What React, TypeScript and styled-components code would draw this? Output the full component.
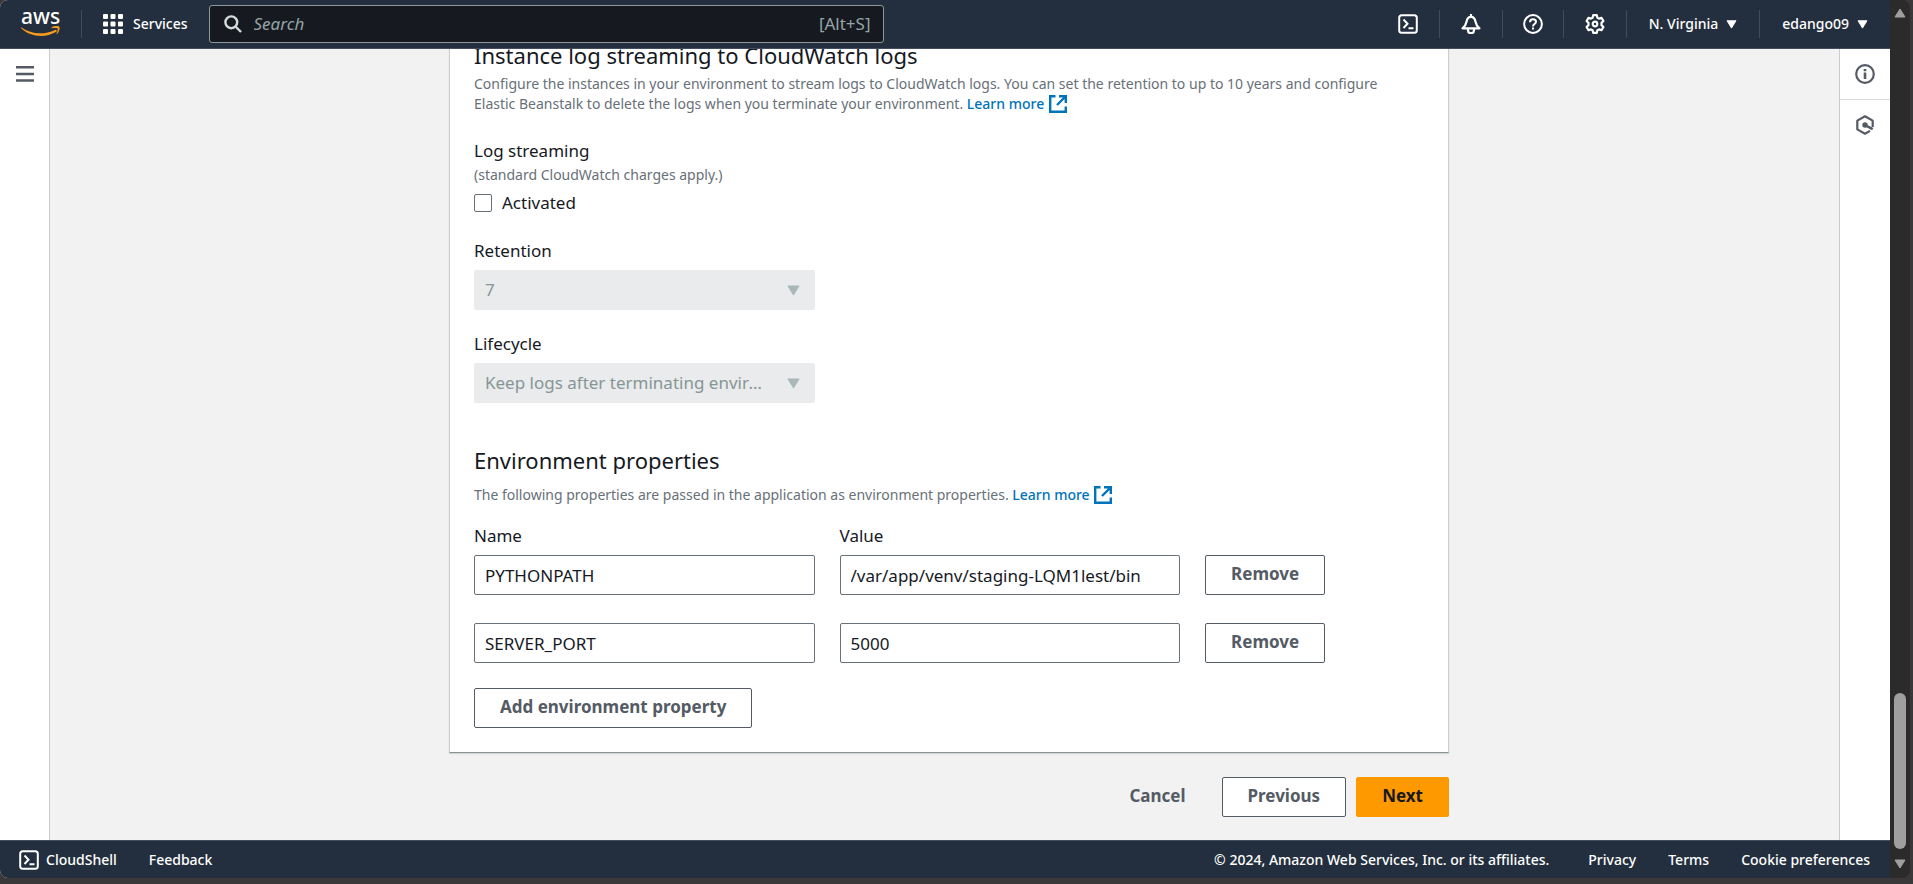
import React from "react";
import styled, { createGlobalStyle } from "styled-components";

const GlobalStyle = createGlobalStyle`
  *, *::before, *::after { box-sizing: border-box; }
  body {
    margin: 0;
    background: #3a3838;
    color: #16191f;
    font: 400 17px/24px "Noto Sans", "Open Sans", sans-serif;
  }
  button, input, select { font: inherit; color: inherit; }
  a { text-decoration: none; }
`;

/* ---------- window frame ---------- */

const Window = styled.div`
  display: flex;
  height: 100vh;
  padding: 0 3px 6px 0;
`;

const Page = styled.div`
  flex: 1;
  min-width: 0;
  display: flex;
  flex-direction: column;
  overflow: hidden;
  border-radius: 8px 0 0 8px;
  background: #f2f2f2;
`;

const Scrollbar = styled.div`
  width: 20px;
  display: flex;
  flex-direction: column;
  align-items: center;
  justify-content: space-between;
  padding: 8px 1px 9px 0;
  background: #2b2b2b;
  border-radius: 0 8px 8px 0;
`;

const ScrollTrack = styled.div`
  flex: 1;
  display: flex;
  flex-direction: column;
  justify-content: flex-end;
  padding-bottom: 10px;
`;

const ScrollThumb = styled.div`
  width: 12px;
  height: 156px;
  border-radius: 6px;
  background: #9f9f9f;
`;

/* ---------- top bar ---------- */

const TopBar = styled.header`
  flex: none;
  height: 49px;
  display: flex;
  align-items: center;
  justify-content: space-between;
  background: #232f3e;
  border-bottom: 1px solid #414d5c;
  color: #fff;
  font-size: 14px;
  line-height: 20px;
  font-weight: 500;
`;

const BarGroup = styled.div`
  display: flex;
  align-items: center;
`;

const LogoLink = styled.a`
  display: flex;
  padding: 0 20px;
  svg { overflow: visible; }
`;

const Divider = styled.span`
  width: 1px;
  height: 28px;
  background: #414d5c;
`;

const BarButton = styled.button<{ $pad: number; $gap?: number }>`
  display: flex;
  align-items: center;
  gap: ${(p) => p.$gap ?? 8}px;
  height: 40px;
  padding: 0 ${(p) => p.$pad}px;
  border: 0;
  background: none;
  cursor: pointer;
`;

const SearchBox = styled.label`
  display: flex;
  align-items: center;
  width: 675px;
  height: 38px;
  padding: 0 12px 0 14px;
  border: 1px solid #8d9999;
  border-radius: 3px;
  background: #16191f;
  font-size: 17px;
  font-weight: 400;
  color: #95a5a6;
`;

const SearchInput = styled.input`
  flex: 1;
  min-width: 0;
  padding: 0 12px;
  border: 0;
  outline: 0;
  background: none;
  &::placeholder { color: #95a5a6; font-style: italic; opacity: 1; }
`;

/* ---------- body ---------- */

const Body = styled.div`
  flex: 1;
  min-height: 0;
  display: flex;
`;

const LeftRail = styled.nav`
  width: 50px;
  background: #fff;
  border-right: 1px solid #c6cdcd;
`;

const RightRail = styled.aside`
  width: 51px;
  background: #fff;
  border-left: 1px solid #c6cdcd;
`;

const RailButton = styled.button<{ $line?: boolean }>`
  display: flex;
  align-items: center;
  justify-content: center;
  width: 100%;
  height: ${(p) => (p.$line ? 51 : 50)}px;
  padding: 0;
  border: 0;
  border-bottom: ${(p) => (p.$line ? "1px solid #d5dbdb" : "0")};
  background: none;
  color: #545b64;
  cursor: pointer;
`;

const Main = styled.main`
  flex: 1;
  min-width: 0;
  display: flex;
  flex-direction: column;
  justify-content: flex-end;
  align-items: center;
  overflow: hidden;
  padding: 0 0 23px 9px;
`;

const Column = styled.form`
  width: 1000px;
  max-width: 100%;
`;

const Card = styled.div`
  padding: 16px 24px 24px;
  background: #fff;
  border: 1px solid #c9cecf;
  border-top-color: #eaeded;
  border-bottom-color: #879596;
  box-shadow: 0 1px 1px #0000001f;
`;

const Section = styled.section`
  & + & { margin-top: 42px; }
`;

const Heading = styled.h2`
  margin: 0;
  font-size: 22px;
  line-height: 30px;
  font-weight: 400;
`;

const Hint = styled.p<{ $top?: number }>`
  margin: ${(p) => p.$top ?? 2}px 0 0;
  max-width: 940px;
  font-size: 14px;
  line-height: 20px;
  color: #687078;
`;

const InfoLink = styled.a`
  color: #0073bb;
  font-weight: 500;
  white-space: nowrap;
  svg { vertical-align: -4px; margin-left: 1px; }
`;

const Field = styled.div<{ $top: number }>`
  margin-top: ${(p) => p.$top}px;
`;

const FieldLabel = styled.label`
  display: block;
`;

const Legend = styled.div`
  display: block;
`;

const CheckLabel = styled.label`
  display: flex;
  align-items: center;
  gap: 10px;
  margin-top: 6px;
  line-height: 24px;
`;

const Checkbox = styled.input`
  appearance: none;
  width: 18px;
  height: 18px;
  margin: 0;
  border: 1px solid #687078;
  border-radius: 2px;
  background: #fff;
`;

const Grid = styled.div`
  display: grid;
  grid-template-columns: 14fr 14fr 9fr;
  column-gap: 25px;
`;

const SelectWrap = styled.div`
  display: grid;
  align-items: center;
  margin-top: 7px;
  & > * { grid-area: 1 / 1; }
  & > svg { justify-self: end; margin-right: 15px; pointer-events: none; }
`;

const Select = styled.select`
  appearance: none;
  width: 100%;
  height: 40px;
  padding: 0 48px 0 11px;
  border: 0;
  border-radius: 2px;
  background: #e9ebec;
  color: #879596;
  opacity: 1;
  text-overflow: ellipsis;
`;

const PropertyGrid = styled(Grid)`
  margin-top: 19px;
`;

const PropertyRow = styled(Grid)<{ $top: number }>`
  margin-top: ${(p) => p.$top}px;
  justify-items: start;
`;

const TextInput = styled.input`
  width: 100%;
  height: 40px;
  padding: 0 10px;
  border: 1px solid #687078;
  border-radius: 2px;
  background: #fff;
`;

const Button = styled.button<{ $kind?: "primary" | "link" }>`
  height: 40px;
  padding: 0 25px 2px;
  border: 1px solid #545b64;
  border-radius: 2px;
  background: #fff;
  color: #545b64;
  font-weight: 700;
  cursor: pointer;
  ${(p) => p.$kind === "primary" && "background: #ff9900; border-color: #ff9900; color: #16191f;"}
  ${(p) => p.$kind === "link" && "background: none; border-color: transparent;"}
`;

const AddRow = styled.div`
  margin-top: 25px;
`;

const Actions = styled.div`
  display: flex;
  justify-content: flex-end;
  gap: 10px;
  margin-top: 24px;
`;

/* ---------- footer ---------- */

const Footer = styled.footer`
  flex: none;
  height: 38px;
  display: flex;
  align-items: center;
  justify-content: space-between;
  padding: 0 20px 0 19px;
  background: #232f3e;
  border-top: 1px solid #414d5c;
  color: #fff;
  font-size: 14px;
  line-height: 20px;
  font-weight: 500;
`;

const FooterGroup = styled.div`
  display: flex;
  align-items: center;
  gap: 32px;
`;

const Copyright = styled.span`
  padding-right: 7px;
`;

const FooterLink = styled.a`
  display: flex;
  align-items: center;
  gap: 7px;
  color: #fff;
`;

/* ---------- icons ---------- */

const AwsLogo = () => (
  <svg width="41" height="30" viewBox="0 0 41 30" aria-label="aws" role="img">
    <text x="1" y="15" fontFamily="Noto Sans, sans-serif" fontSize="21" fontWeight="500" fill="#fff">aws</text>
    <path d="M1.5 18.5c9 6.500 22 8 33.500 2.500 1.500-.7 2.500 1 1.200 1.800C25 29.500 10 28 1.200 19.300c-.5-.6-.2-1.100.3-.8z" fill="#f79a1e" />
    <path d="M31.500 18.600c2.400-1.700 6.700-1.900 7.800-.9 1 1.300-.3 5.300-2.200 7.200-.4.300-.8.100-.6-.3.800-1.700 1.700-4.100 1.100-4.900-.7-.9-3.600-.7-5.700-.5-.5 0-.7-.3-.4-.6z" fill="#f79a1e" />
  </svg>
);

const GridIcon = () => (
  <svg width="20" height="20" viewBox="0 0 20 20" fill="#fff">
    {[0, 7.5, 15].map((y) =>
      [0, 7.5, 15].map((x) => <rect key={`${x}-${y}`} x={x} y={y} width="5" height="5" rx="1" />),
    )}
  </svg>
);

const SearchIcon = () => (
  <svg width="18" height="18" viewBox="0 0 18 18" fill="none" stroke="#d5dbdb" strokeWidth="2.400">
    <circle cx="7.300" cy="7.300" r="5.900" />
    <path d="M11.500 11.500L17 17" />
  </svg>
);

const ShellIcon = () => (
  <svg width="20" height="20" viewBox="0 0 20 20" fill="none" stroke="#fff" strokeWidth="2">
    <rect x="1.200" y="1.200" width="17.600" height="17.600" rx="2.500" />
    <path d="M5.500 5.500l4 4.300-4 4.200M10.500 14.200h5" />
  </svg>
);

const BellIcon = () => (
  <svg width="20" height="20" viewBox="0 0 20 20" fill="none" stroke="#fff" strokeWidth="2.200" strokeLinejoin="round">
    <path d="M10 0v2.500M1.500 14.300h17c-2.600-2-3.500-3.700-4-6.600C14 4.700 12.500 2.800 10 2.800S6 4.700 5.500 7.700c-.5 2.900-1.400 4.600-4 6.600z" />
    <path d="M7 15v1.200a3 3 0 006 0V15" />
  </svg>
);

const HelpIcon = () => (
  <svg width="20" height="20" viewBox="0 0 20 20" fill="none" stroke="#fff" strokeWidth="2">
    <circle cx="10" cy="10" r="8.900" />
    <path d="M7 8.200C7 6.300 8.300 5.200 10 5.200s3 1.100 3 2.600c0 2.200-3 2.200-3 4.600M10 13.600v2" />
  </svg>
);

const GearIcon = () => (
  <svg width="20" height="20" viewBox="0 0 20 20" fill="none" stroke="#fff" strokeWidth="2.200" strokeLinejoin="round">
    <path d="M8.200 1.200h3.600l.6 2.500 1.600.9 2.500-.8 1.900 3.200-1.900 1.900v2.200l1.900 1.900-1.900 3.200-2.500-.8-1.600.9-.6 2.500H8.200l-.6-2.500-1.600-.9-2.500.8L1.600 13l1.900-1.900V8.900L1.600 7l1.900-3.200 2.500.8 1.600-.9z" />
    <circle cx="10" cy="10" r="2.300" />
  </svg>
);

const Caret = ({ size, color }: { size: number; color: string }) => (
  <svg width={size} height={size - 2} viewBox="0 0 12 10" fill={color} stroke={color} strokeLinejoin="round">
    <path d="M1 .8h10L6 9z" />
  </svg>
);

const ScrollArrow = ({ up }: { up?: boolean }) => (
  <svg width="12" height="10" viewBox="0 0 12 10" fill="#9f9f9f" stroke="#9f9f9f" strokeLinejoin="round">
    <path d={up ? "M1 9h10L6 1z" : "M1 1h10L6 9z"} />
  </svg>
);

const MenuIcon = () => (
  <svg width="18" height="16" viewBox="0 0 18 16" fill="#545b64">
    <path d="M0 0h18v2.500H0zM0 6.700h18v2.500H0zM0 13.300h18v2.500H0z" />
  </svg>
);

const InfoIcon = () => (
  <svg width="20" height="20" viewBox="0 0 20 20" fill="none" stroke="currentColor" strokeWidth="2.200">
    <circle cx="10" cy="10" r="8.800" />
    <path d="M10 8.500V15M10 5v2.300" strokeWidth="2.600" />
  </svg>
);

const HexIcon = () => (
  <svg width="20" height="20" viewBox="0 0 20 20" fill="none" stroke="currentColor" strokeWidth="2.200" strokeLinejoin="round">
    <path d="M17.700 12V5.600L10 1.300 2.300 5.600v8.800l7.700 4.300 5-2.800" />
    <circle cx="10" cy="10" r="2.700" fill="currentColor" stroke="none" />
    <path d="M10.500 10.300l7.200 3.800" strokeWidth="2.600" />
  </svg>
);

const ExternalIcon = () => (
  <svg width="18" height="18" viewBox="0 0 18 18" fill="none" stroke="#0073bb" strokeWidth="2.400">
    <path d="M6.500 1.300H1.200v15.500h15.600v-5.300M10 1.300h6.800V8M16.500 1.500L8 10" />
  </svg>
);

/* ---------- page ---------- */

const properties = [
  { name: "PYTHONPATH", value: "/var/app/venv/staging-LQM1lest/bin" },
  { name: "SERVER_PORT", value: "5000" },
];

const LearnMore = () => (
  <InfoLink href="#">
    Learn more <ExternalIcon />
  </InfoLink>
);

export default function App() {
  return (
    <>
      <GlobalStyle />
      <Window>
        <Page>
          <TopBar>
            <BarGroup>
              <LogoLink href="#"><AwsLogo /></LogoLink>
              <Divider />
              <BarButton $pad={21} $gap={10}><GridIcon />Services</BarButton>
              <SearchBox>
                <SearchIcon />
                <SearchInput type="search" placeholder="Search" aria-label="Search" />
                <span>[Alt+S]</span>
              </SearchBox>
            </BarGroup>
            <BarGroup>
              <BarButton $pad={21} aria-label="CloudShell"><ShellIcon /></BarButton>
              <Divider />
              <BarButton $pad={21} aria-label="Notifications"><BellIcon /></BarButton>
              <Divider />
              <BarButton $pad={20} aria-label="Help"><HelpIcon /></BarButton>
              <Divider />
              <BarButton $pad={21} aria-label="Settings"><GearIcon /></BarButton>
              <Divider />
              <BarButton $pad={22}>N. Virginia<Caret size={11} color="#fff" /></BarButton>
              <Divider />
              <BarButton $pad={22}>edango09<Caret size={11} color="#fff" /></BarButton>
            </BarGroup>
          </TopBar>

          <Body>
            <LeftRail>
              <RailButton aria-label="Open navigation"><MenuIcon /></RailButton>
            </LeftRail>

            <Main>
              <Column onSubmit={(e) => e.preventDefault()}>
                <Card>
                  <Section>
                    <Heading>Instance log streaming to CloudWatch logs</Heading>
                    <Hint $top={4}>
                      Configure the instances in your environment to stream logs to CloudWatch logs. You can set
                      the retention to up to 10 years and configure Elastic Beanstalk to delete the logs when you
                      terminate your environment. <LearnMore />
                    </Hint>
                    <Field $top={25}>
                      <Legend>Log streaming</Legend>
                      <Hint>(standard CloudWatch charges apply.)</Hint>
                      <CheckLabel>
                        <Checkbox type="checkbox" />
                        Activated
                      </CheckLabel>
                    </Field>
                    <Field $top={24}>
                      <FieldLabel htmlFor="retention">Retention</FieldLabel>
                      <Grid>
                        <SelectWrap>
                          <Select id="retention" disabled>
                            <option>7</option>
                          </Select>
                          <Caret size={13} color="#aab7b8" />
                        </SelectWrap>
                      </Grid>
                    </Field>
                    <Field $top={22}>
                      <FieldLabel htmlFor="lifecycle">Lifecycle</FieldLabel>
                      <Grid>
                        <SelectWrap>
                          <Select id="lifecycle" disabled>
                            <option>Keep logs after terminating environment</option>
                          </Select>
                          <Caret size={13} color="#aab7b8" />
                        </SelectWrap>
                      </Grid>
                    </Field>
                  </Section>

                  <Section>
                    <Heading>Environment properties</Heading>
                    <Hint $top={10}>
                      The following properties are passed in the application as environment properties.{" "}
                      <LearnMore />
                    </Hint>
                    <PropertyGrid>
                      <FieldLabel htmlFor="name-0">Name</FieldLabel>
                      <FieldLabel htmlFor="value-0">Value</FieldLabel>
                    </PropertyGrid>
                    {properties.map((p, i) => (
                      <PropertyRow key={p.name} $top={i ? 28 : 7}>
                        <TextInput id={`name-${i}`} aria-label="Name" defaultValue={p.name} />
                        <TextInput id={`value-${i}`} aria-label="Value" defaultValue={p.value} />
                        <Button type="button">Remove</Button>
                      </PropertyRow>
                    ))}
                    <AddRow>
                      <Button type="button">Add environment property</Button>
                    </AddRow>
                  </Section>
                </Card>

                <Actions>
                  <Button type="button" $kind="link">Cancel</Button>
                  <Button type="button">Previous</Button>
                  <Button type="submit" $kind="primary">Next</Button>
                </Actions>
              </Column>
            </Main>

            <RightRail>
              <RailButton $line aria-label="Info"><InfoIcon /></RailButton>
              <RailButton aria-label="Diagnostics"><HexIcon /></RailButton>
            </RightRail>
          </Body>

          <Footer>
            <FooterGroup>
              <FooterLink href="#"><ShellIcon />CloudShell</FooterLink>
              <FooterLink href="#">Feedback</FooterLink>
            </FooterGroup>
            <FooterGroup>
              <Copyright>© 2024, Amazon Web Services, Inc. or its affiliates.</Copyright>
              <FooterLink href="#">Privacy</FooterLink>
              <FooterLink href="#">Terms</FooterLink>
              <FooterLink href="#">Cookie preferences</FooterLink>
            </FooterGroup>
          </Footer>
        </Page>

        <Scrollbar>
          <ScrollArrow up />
          <ScrollTrack><ScrollThumb /></ScrollTrack>
          <ScrollArrow />
        </Scrollbar>
      </Window>
    </>
  );
}
